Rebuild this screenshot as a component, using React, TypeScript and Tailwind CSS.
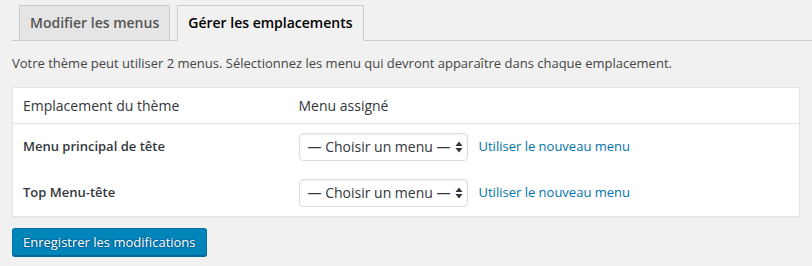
const rows = ['Menu principal de tête', 'Top Menu-tête'];

function MenuSelect() {
  return (
    <div className="relative w-[169px]">
      <select className="h-[28px] w-full appearance-none rounded-[4px] border border-[#dddddd] bg-white pl-[8px] pr-[2px] text-[14px] text-[#32373c] shadow-[inset_0_1px_2px_rgba(0,0,0,0.07)] outline-none">
        <option>— Choisir un menu —</option>
      </select>
      <svg
        className="pointer-events-none absolute right-[5px] top-[8px]"
        width="8"
        height="12"
        viewBox="0 0 8 12"
      >
        <path d="M4 0.5 L7.5 5 L0.5 5 Z" fill="#32373c" />
        <path d="M4 11.5 L7.5 7 L0.5 7 Z" fill="#32373c" />
      </svg>
    </div>
  );
}

export default function App() {
  return (
    <div className="min-h-[266px] w-full bg-[#f1f1f1] font-['Open_Sans',sans-serif] text-[13px] text-[#444444]">
      <div className="ml-[12px] flex items-end gap-[7px] border-b border-[#cccccc] pl-[7px] pt-[5px]">
        <div className="-mb-px border border-[#cccccc] bg-[#e5e5e5] px-[10px] py-[5px] text-[14px] font-semibold leading-[24px] text-[#555555]">
          Modifier les menus
        </div>
        <div className="-mb-px border border-[#cccccc] border-b-[#f1f1f1] bg-[#f1f1f1] px-[10px] py-[5px] text-[14px] font-semibold leading-[24px] text-black">
          Gérer les emplacements
        </div>
      </div>

      <div className="px-[12px]">
        <p className="my-[13px] leading-[19.5px]">
          Votre thème peut utiliser 2 menus. Sélectionnez les menu qui devront apparaître dans chaque emplacement.
        </p>

        <table className="w-[788px] border-collapse border border-[#e5e5e5] bg-white shadow-[0_1px_1px_rgba(0,0,0,0.04)]">
          <thead>
            <tr className="border-b border-[#e1e1e1]">
              <th className="w-[276px] px-[10px] py-[7px] text-left text-[14px] font-normal leading-[21px] text-[#32373c]">
                Emplacement du thème
              </th>
              <th className="px-[10px] py-[7px] text-left text-[14px] font-normal leading-[21px] text-[#32373c]">
                Menu assigné
              </th>
            </tr>
          </thead>
          <tbody>
            {rows.map((label) => (
              <tr key={label}>
                <td className="px-[10px] py-[9px] font-semibold text-[#32373c]">{label}</td>
                <td className="px-[10px] py-[9px]">
                  <div className="flex items-center gap-[11px]">
                    <MenuSelect />
                    <a href="#" className="text-[#0073aa]">
                      Utiliser le nouveau menu
                    </a>
                  </div>
                </td>
              </tr>
            ))}
          </tbody>
        </table>

        <button className="mt-[11px] h-[28px] rounded-[3px] border border-[#0073aa] border-b-[#006799] bg-[#0085ba] px-[10px] pb-px leading-[26px] text-white shadow-[0_1px_0_#006799] [text-shadow:0_-1px_1px_#006799,1px_0_1px_#006799,0_1px_1px_#006799,-1px_0_1px_#006799]">
          Enregistrer les modifications
        </button>
      </div>
    </div>
  );
}
